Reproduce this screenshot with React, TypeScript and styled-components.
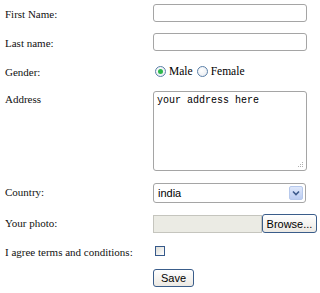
import React from "react";
import styled, { createGlobalStyle } from "styled-components";

const Global = createGlobalStyle`
  html, body { margin: 0; padding: 0; background: #fff; }
  body { font-family: "Liberation Serif", "Times New Roman", serif; color: #000; }
`;

const Form = styled.form`
  display: flex;
  flex-direction: column;
  gap: 11px;
  padding: 4px 0 0 5px;
  width: 320px;
  box-sizing: border-box;
`;

const Row = styled.div<{ $h: number }>`
  display: grid;
  grid-template-columns: 148px auto;
  align-items: start;
  height: ${(p) => p.$h}px;
`;

const Label = styled.label<{ $pt?: number }>`
  font-size: 11px;
  line-height: 14px;
  padding-top: ${(p) => p.$pt ?? 3}px;
  white-space: nowrap;
  color: #111;
`;

const Cell = styled.div`
  display: flex;
  align-items: center;
`;

const TextInput = styled.input`
  box-sizing: border-box;
  width: 154px;
  height: 18px;
  border: 1px solid #a5a5a5;
  border-radius: 3px;
  padding: 0 3px;
  margin: 0;
  background: #fff;
  outline: none;
`;

const RadioGroup = styled.div`
  display: flex;
  align-items: center;
  height: 18px;
  font-size: 11.5px;
  padding-left: 2px;
`;

const RadioCircle = styled.span<{ $checked?: boolean }>`
  box-sizing: border-box;
  width: 11px;
  height: 11px;
  border-radius: 50%;
  border: 1px solid #5a7fa8;
  background: radial-gradient(circle at 40% 40%, #fff 0%, #e4e8ee 100%);
  display: inline-flex;
  align-items: center;
  justify-content: center;
  margin-right: 3px;
  &::after {
    content: "";
    display: ${(p) => (p.$checked ? "block" : "none")};
    width: 5px;
    height: 5px;
    border-radius: 50%;
    background: #2db84a;
  }
`;

const RadioText = styled.span`
  margin-right: 4px;
`;

const TextArea = styled.div`
  position: relative;
  box-sizing: border-box;
  width: 154px;
  height: 80px;
  border: 1px solid #a5a5a5;
  border-radius: 3px;
  padding: 3px 3px;
  font-family: "Liberation Mono", "Courier New", monospace;
  font-size: 10px;
  line-height: 12px;
  background: #fff;
`;

const Grip = styled.svg`
  position: absolute;
  right: 2px;
  bottom: 2px;
`;

const Select = styled.div`
  box-sizing: border-box;
  width: 153px;
  height: 20px;
  border: 1px solid #a5a5a5;
  border-radius: 3px;
  display: flex;
  align-items: center;
  justify-content: space-between;
  padding: 0 2px 0 4px;
  font-family: "Liberation Sans", Arial, sans-serif;
  font-size: 11px;
  background: #fff;
`;

const Arrow = styled.span`
  box-sizing: border-box;
  width: 14px;
  height: 14px;
  border: 1px solid #b7c9ec;
  border-radius: 2px;
  background: linear-gradient(#dfe8fb, #bccdf2);
  display: flex;
  align-items: center;
  justify-content: center;
`;

const FileRow = styled.div`
  display: flex;
  align-items: center;
  height: 19px;
`;

const FileField = styled.div`
  box-sizing: border-box;
  width: 109px;
  height: 18px;
  border: 1px solid #c5c5be;
  background: #ebebe4;
`;

const Button = styled.button<{ $w: number; $h?: number }>`
  box-sizing: border-box;
  width: ${(p) => p.$w}px;
  height: ${(p) => p.$h ?? 18}px;
  border: 1px solid #3a5d8a;
  border-radius: 3px;
  background: linear-gradient(#ffffff, #ece9e3);
  font-family: "Liberation Sans", Arial, sans-serif;
  font-size: 11px;
  color: #000;
  padding: 0;
  margin: 0;
`;

const Check = styled.span`
  box-sizing: border-box;
  display: block;
  width: 10px;
  height: 10px;
  border: 1px solid #36598a;
  background: linear-gradient(135deg, #dcdcd6, #fff);
  margin: 2px 0 0 2px;
`;

export default function App() {
  return (
    <>
      <Global />
      <Form onSubmit={(e) => e.preventDefault()}>
        <Row $h={18}>
          <Label>First Name:</Label>
          <TextInput type="text" />
        </Row>
        <Row $h={18}>
          <Label>Last name:</Label>
          <TextInput type="text" />
        </Row>
        <Row $h={18}>
          <Label>Gender:</Label>
          <RadioGroup>
            <RadioCircle $checked />
            <RadioText>Male</RadioText>
            <RadioCircle />
            <RadioText>Female</RadioText>
          </RadioGroup>
        </Row>
        <Row $h={81}>
          <Label $pt={1}>Address</Label>
          <TextArea>
            your address here
            <Grip width="6" height="6" viewBox="0 0 6 6">
              <g fill="#b0b0b0">
                <rect x="4" y="0" width="1" height="1" />
                <rect x="2" y="2" width="1" height="1" />
                <rect x="4" y="2" width="1" height="1" />
                <rect x="0" y="4" width="1" height="1" />
                <rect x="2" y="4" width="1" height="1" />
                <rect x="4" y="4" width="1" height="1" />
              </g>
            </Grip>
          </TextArea>
        </Row>
        <Row $h={20}>
          <Label $pt={2}>Country:</Label>
          <Cell>
            <Select>
              india
              <Arrow>
                <svg width="8" height="6" viewBox="0 0 8 6">
                  <path d="M1 1.5 L4 4.5 L7 1.5" stroke="#3d5a8c" strokeWidth="1.6" fill="none" />
                </svg>
              </Arrow>
            </Select>
          </Cell>
        </Row>
        <Row $h={19}>
          <Label $pt={2}>Your photo:</Label>
          <FileRow>
            <FileField />
            <Button type="button" $w={55} $h={19}>Browse...</Button>
          </FileRow>
        </Row>
        <Row $h={14}>
          <Label $pt={1}>I agree terms and conditions:</Label>
          <Cell>
            <Check />
          </Cell>
        </Row>
        <Row $h={18}>
          <span />
          <Button type="submit" $w={41}>Save</Button>
        </Row>
      </Form>
    </>
  );
}
